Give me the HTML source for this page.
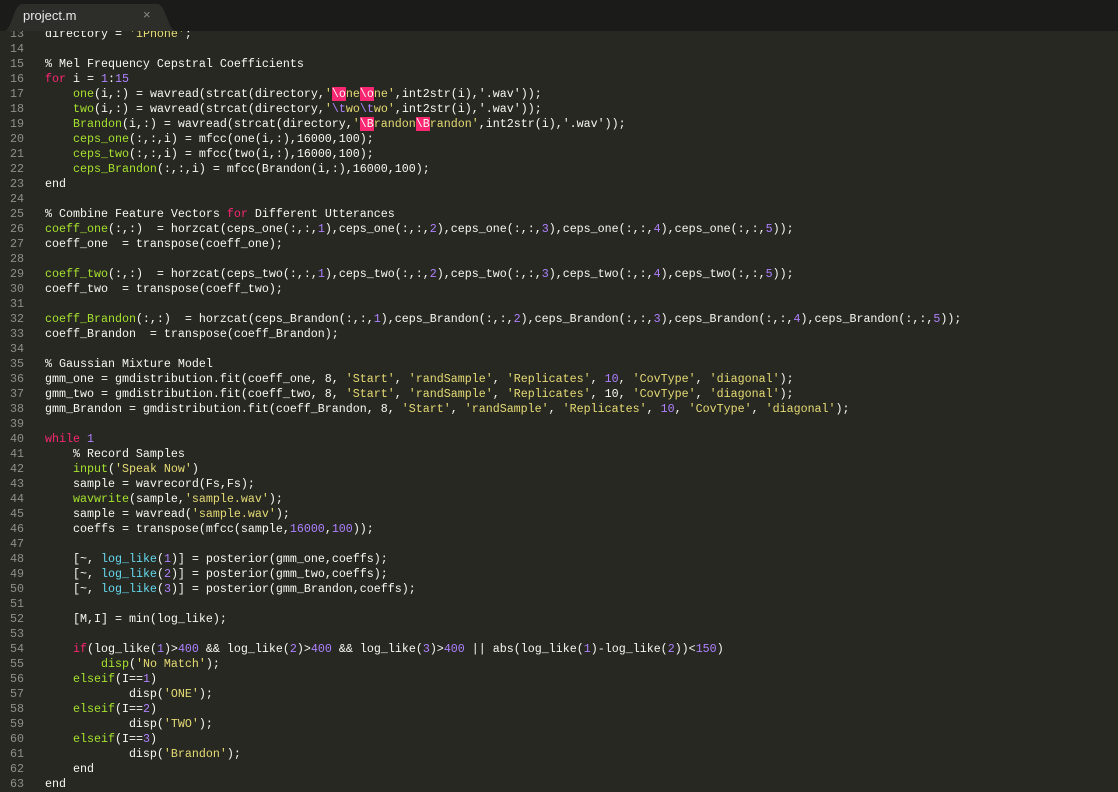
<!DOCTYPE html>
<html><head><meta charset="utf-8"><style>
html,body{margin:0;padding:0;}
body{width:1118px;height:792px;background:#272822;overflow:hidden;position:relative;font-family:"Liberation Mono",monospace;}
#bar{position:absolute;left:0;top:0;width:1118px;height:31px;background:#1b1b19;}
#tabtxt{position:absolute;left:23px;top:8px;font:13px "Liberation Sans",sans-serif;color:#e8e8e8;}
#x{position:absolute;left:143px;top:7px;font:13px "Liberation Sans",sans-serif;color:#8a8a86;}
#code{position:absolute;left:0;top:31px;width:1118px;height:761px;overflow:hidden;}
.ln{position:absolute;left:0;width:1118px;height:15px;line-height:15px;font-size:11.67px;white-space:pre;}
.n{position:absolute;left:0;width:24px;text-align:right;color:#8f908a;}
.t{position:absolute;left:45px;color:#f8f8f2;}
.k{color:#f92672}.u{color:#ae81ff}.s{color:#e6db74}.g{color:#a6e22e}.c{color:#66d9ef}
.x{background:#f92672;color:#f8f8f0}
</style></head><body>
<div id="bar">
<svg width="200" height="31" style="position:absolute;left:0;top:0"><path d="M4 31 C12 31 13 5 22 4 L158 4 C166 5 168 31 176 31 Z" fill="#2d2d2a"/></svg>
<div id="tabtxt">project.m</div><div id="x">×</div>
</div>
<div id="code" id2="">
<div id="lines"></div>
</div>
<script>
const L={
13:"directory = <span class=s>'iPhone'</span>;",
14:"",
15:"% Mel Frequency Cepstral Coefficients",
16:"<span class=k>for</span> i = <span class=u>1</span>:<span class=u>15</span>",
17:"    <span class=g>one</span>(i,:) = wavread(strcat(directory,<span class=s>'</span><span class=x>\\o</span><span class=s>ne</span><span class=x>\\o</span><span class=s>ne'</span>,int2str(i),'.wav'));",
18:"    <span class=g>two</span>(i,:) = wavread(strcat(directory,<span class=s>'</span><span class=u>\\t</span><span class=s>wo</span><span class=u>\\t</span><span class=s>wo'</span>,int2str(i),'.wav'));",
19:"    <span class=g>Brandon</span>(i,:) = wavread(strcat(directory,<span class=s>'</span><span class=x>\\B</span><span class=s>randon</span><span class=x>\\B</span><span class=s>randon'</span>,int2str(i),'.wav'));",
20:"    <span class=g>ceps_one</span>(:,:,i) = mfcc(one(i,:),16000,100);",
21:"    <span class=g>ceps_two</span>(:,:,i) = mfcc(two(i,:),16000,100);",
22:"    <span class=g>ceps_Brandon</span>(:,:,i) = mfcc(Brandon(i,:),16000,100);",
23:"end",
24:"",
25:"% Combine Feature Vectors <span class=k>for</span> Different Utterances",
26:"<span class=g>coeff_one</span>(:,:)  = horzcat(ceps_one(:,:,<span class=u>1</span>),ceps_one(:,:,<span class=u>2</span>),ceps_one(:,:,<span class=u>3</span>),ceps_one(:,:,<span class=u>4</span>),ceps_one(:,:,<span class=u>5</span>));",
27:"coeff_one  = transpose(coeff_one);",
28:"",
29:"<span class=g>coeff_two</span>(:,:)  = horzcat(ceps_two(:,:,<span class=u>1</span>),ceps_two(:,:,<span class=u>2</span>),ceps_two(:,:,<span class=u>3</span>),ceps_two(:,:,<span class=u>4</span>),ceps_two(:,:,<span class=u>5</span>));",
30:"coeff_two  = transpose(coeff_two);",
31:"",
32:"<span class=g>coeff_Brandon</span>(:,:)  = horzcat(ceps_Brandon(:,:,<span class=u>1</span>),ceps_Brandon(:,:,<span class=u>2</span>),ceps_Brandon(:,:,<span class=u>3</span>),ceps_Brandon(:,:,<span class=u>4</span>),ceps_Brandon(:,:,<span class=u>5</span>));",
33:"coeff_Brandon  = transpose(coeff_Brandon);",
34:"",
35:"% Gaussian Mixture Model",
36:"gmm_one = gmdistribution.fit(coeff_one, 8, <span class=s>'Start'</span>, <span class=s>'randSample'</span>, <span class=s>'Replicates'</span>, <span class=u>10</span>, <span class=s>'CovType'</span>, <span class=s>'diagonal'</span>);",
37:"gmm_two = gmdistribution.fit(coeff_two, 8, <span class=s>'Start'</span>, <span class=s>'randSample'</span>, <span class=s>'Replicates'</span>, 10, <span class=s>'CovType'</span>, <span class=s>'diagonal'</span>);",
38:"gmm_Brandon = gmdistribution.fit(coeff_Brandon, 8, <span class=s>'Start'</span>, <span class=s>'randSample'</span>, <span class=s>'Replicates'</span>, <span class=u>10</span>, <span class=s>'CovType'</span>, <span class=s>'diagonal'</span>);",
39:"",
40:"<span class=k>while</span> <span class=u>1</span>",
41:"    % Record Samples",
42:"    <span class=g>input</span>(<span class=s>'Speak Now'</span>)",
43:"    sample = wavrecord(Fs,Fs);",
44:"    <span class=g>wavwrite</span>(sample,<span class=s>'sample.wav'</span>);",
45:"    sample = wavread(<span class=s>'sample.wav'</span>);",
46:"    coeffs = transpose(mfcc(sample,<span class=u>16000</span>,<span class=u>100</span>));",
47:"",
48:"    [~, <span class=c>log_like</span>(<span class=u>1</span>)] = posterior(gmm_one,coeffs);",
49:"    [~, <span class=c>log_like</span>(<span class=u>2</span>)] = posterior(gmm_two,coeffs);",
50:"    [~, <span class=c>log_like</span>(<span class=u>3</span>)] = posterior(gmm_Brandon,coeffs);",
51:"",
52:"    [M,I] = min(log_like);",
53:"",
54:"    <span class=k>if</span>(log_like(<span class=u>1</span>)&gt;<span class=u>400</span> &amp;&amp; log_like(<span class=u>2</span>)&gt;<span class=u>400</span> &amp;&amp; log_like(<span class=u>3</span>)&gt;<span class=u>400</span> || abs(log_like(<span class=u>1</span>)-log_like(<span class=u>2</span>))&lt;<span class=u>150</span>)",
55:"        <span class=g>disp</span>(<span class=s>'No Match'</span>);",
56:"    <span class=g>elseif</span>(I==<span class=u>1</span>)",
57:"            disp(<span class=s>'ONE'</span>);",
58:"    <span class=g>elseif</span>(I==<span class=u>2</span>)",
59:"            disp(<span class=s>'TWO'</span>);",
60:"    <span class=g>elseif</span>(I==<span class=u>3</span>)",
61:"            disp(<span class=s>'Brandon'</span>);",
62:"    end",
63:"end"};
let h="";
for(let n=13;n<=63;n++){const top=(49+(n-14)*15-7.5)-31;
h+=`<div class="ln" style="top:${top}px"><span class="n">${n}</span><span class="t">${L[n]}</span></div>`;}
document.getElementById("lines").innerHTML=h;
</script>
</body></html>
